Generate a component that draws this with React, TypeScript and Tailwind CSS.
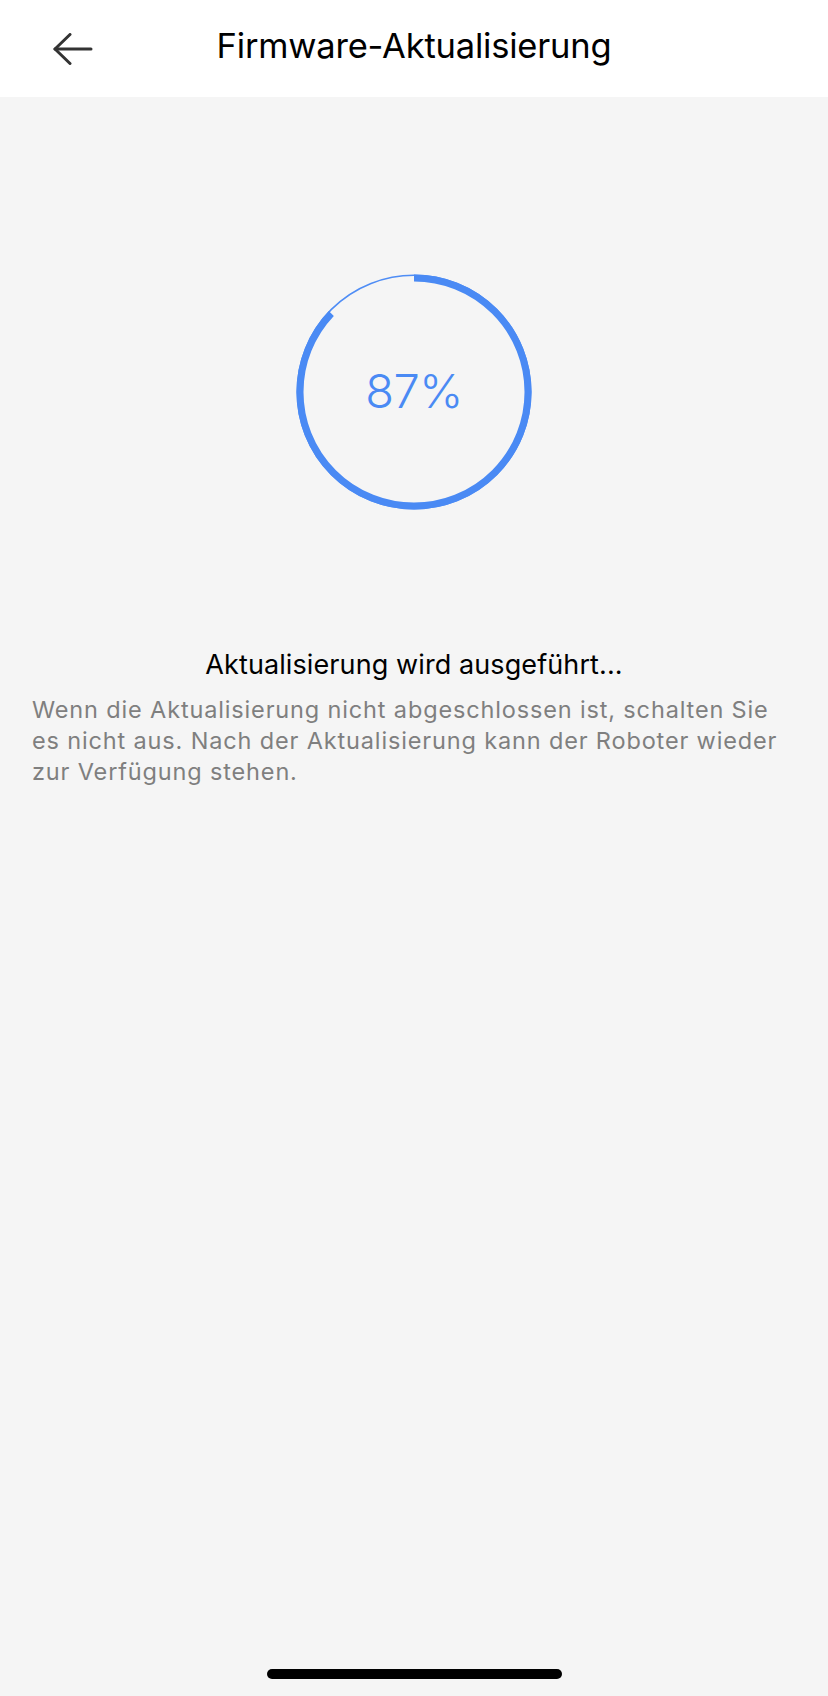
import React from "react";

const FONT = { fontFamily: 'Inter, "Noto Sans", "Liberation Sans", sans-serif' };

function BackArrow() {
  return (
    <svg width="40" height="32" viewBox="0 0 40 32" fill="none" stroke="#333333" strokeWidth="3" strokeLinecap="round" strokeLinejoin="round">
      <path d="M38 16H2" />
      <path d="M17 1.5L2 16l15 14.5" />
    </svg>
  );
}

function ProgressRing({ value }: { value: number }) {
  const r = 114;
  const c = 2 * Math.PI * r;
  return (
    <div className="relative h-[236px] w-[236px]">
      <svg width="236" height="236" viewBox="0 0 236 236" className="-rotate-90">
        <circle cx="118" cy="118" r="116.8" fill="none" stroke="#4f8df5" strokeWidth="1.6" />
        <circle
          cx="118"
          cy="118"
          r={r}
          fill="none"
          stroke="#4a8af4"
          strokeWidth="7"
          strokeDasharray={`${(c * value) / 100} ${c}`}
        />
      </svg>
      <div className="absolute inset-0 flex items-center justify-center pb-1">
        <span className="text-[47px] font-light leading-none tracking-[-0.5px] text-[#4a8af4]">{value}%</span>
      </div>
    </div>
  );
}

export default function App() {
  return (
    <main className="flex min-h-[1696px] flex-col bg-[#f5f5f5]" style={FONT}>
      {/* Header */}
      <header className="grid h-[97px] grid-cols-[1fr_auto_1fr] items-center bg-white pb-[5px]">
        <button className="ml-[53px] mt-[5px] flex h-10 w-10 items-center">
          <BackArrow />
        </button>
        <h1 className="text-[34.5px] font-normal tracking-[-0.2px] text-black">Firmware-Aktualisierung</h1>
        <div />
      </header>

      {/* Progress */}
      <div className="mt-[177px] flex justify-center">
        <ProgressRing value={87} />
      </div>

      {/* Status */}
      <div className="mt-[138px] px-8">
        <p className="text-center text-[27px] leading-[34px] tracking-[0.1px] text-black">Aktualisierung wird ausgeführt...</p>
        <p className="mt-[12px] text-[23.5px] leading-[31px] tracking-[0.85px] text-[#7f7f7f]">
          Wenn die Aktualisierung nicht abgeschlossen ist, schalten Sie es nicht aus. Nach der Aktualisierung kann der
          Roboter wieder zur Verfügung stehen.
        </p>
      </div>

      <div className="flex-1" />

      {/* Home indicator */}
      <div className="mb-[17px] flex justify-center">
        <div className="h-[10px] w-[295px] rounded-full bg-black" />
      </div>
    </main>
  );
}
